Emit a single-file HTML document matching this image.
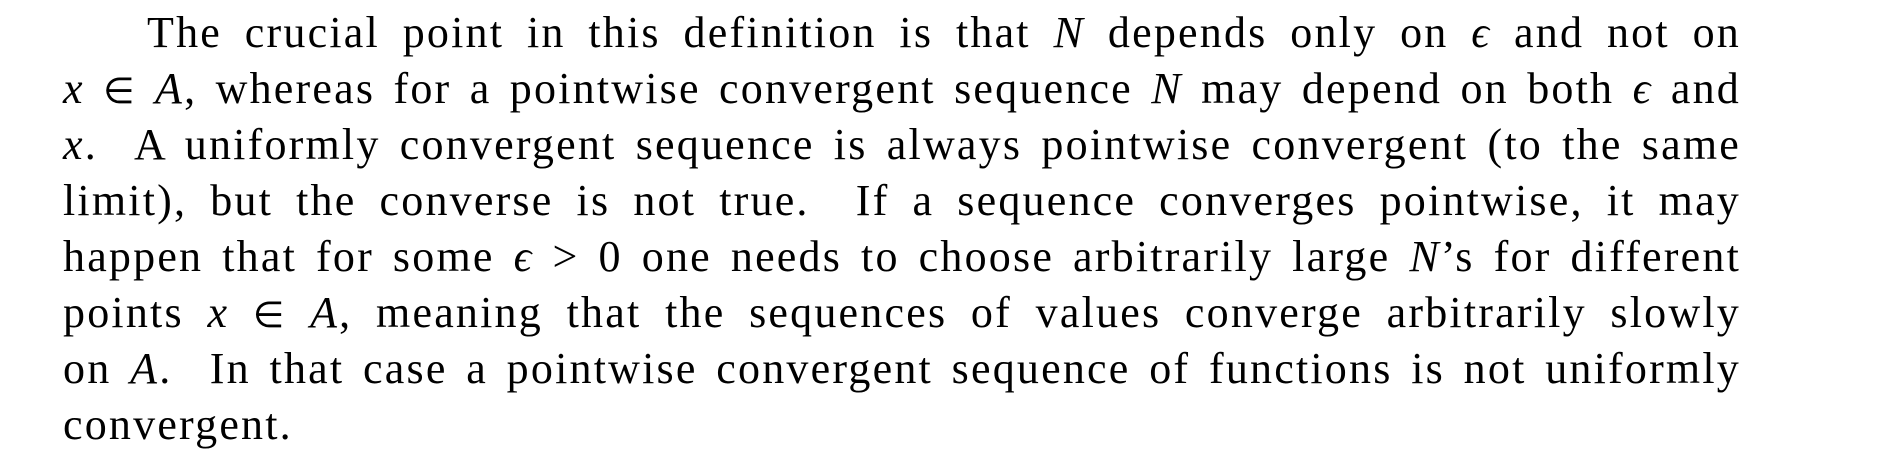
<!DOCTYPE html>
<html><head><meta charset="utf-8"><style>
html,body{margin:0;padding:0;background:#fff;width:1892px;height:469px;overflow:hidden}
.p{position:absolute;left:63px;top:0;width:1678px;font-family:"Liberation Serif",serif;font-size:44px;color:#000;letter-spacing:2.2px}
.l{position:absolute;left:0;width:1678px;text-align:justify;text-align-last:justify;white-space:nowrap;line-height:56px;height:56px}
.l.last{text-align-last:left}
i{font-style:italic}
.e{font-size:36px}
</style></head><body>
<div class="p">
<div class="l" style="top:5px;left:84px;width:1594px">The crucial point in this definition is that <i>N</i> depends only on <i>ϵ</i> and not on</div>
<div class="l" style="top:61px"><i>x</i> <span class="e">∈</span> <i>A</i>, whereas for a pointwise convergent sequence <i>N</i> may depend on both <i>ϵ</i> and</div>
<div class="l" style="top:117px"><i>x</i>.&nbsp; A uniformly convergent sequence is always pointwise convergent (to the same</div>
<div class="l" style="top:173px">limit), but the converse is not true.&nbsp; If a sequence converges pointwise, it may</div>
<div class="l" style="top:229px">happen that for some <i>ϵ</i> &gt; 0 one needs to choose arbitrarily large <i>N</i>’s for different</div>
<div class="l" style="top:285px">points <i>x</i> <span class="e">∈</span> <i>A</i>, meaning that the sequences of values converge arbitrarily slowly</div>
<div class="l" style="top:341px">on <i>A</i>.&nbsp; In that case a pointwise convergent sequence of functions is not uniformly</div>
<div class="l last" style="top:397px">convergent.</div>
</div>
</body></html>
